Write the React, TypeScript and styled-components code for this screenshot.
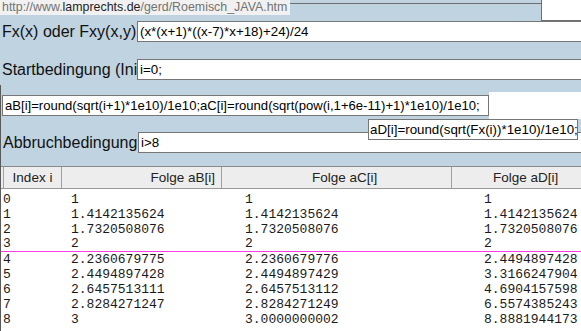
import styled, { createGlobalStyle } from "styled-components";

const GlobalStyle = createGlobalStyle`
  html, body {
    margin: 0;
    padding: 0;
  }

  body {
    background: #bfd3e1;
    font-family: "Liberation Sans", Arial, sans-serif;
  }
`;

const rows = [
  ["0", "1", "1", "1"],
  ["1", "1.4142135624", "1.4142135624", "1.4142135624"],
  ["2", "1.7320508076", "1.7320508076", "1.7320508076"],
  ["3", "2", "2", "2"],
  ["4", "2.2360679775", "2.2360679776", "2.4494897428"],
  ["5", "2.4494897428", "2.4494897429", "3.3166247904"],
  ["6", "2.6457513111", "2.6457513112", "4.6904157598"],
  ["7", "2.8284271247", "2.8284271249", "6.5574385243"],
  ["8", "3", "3.0000000002", "8.8881944173"],
];

export default function App() {
  return (
    <Page>
      <GlobalStyle />
      <TopBar>
        <UrlTip>
          http://www.<Domain>lamprechts.de</Domain>/gerd/Roemisch_JAVA.htm
        </UrlTip>
        <TopLine />
        <CornerBox />
      </TopBar>

      <FieldRow>
        <Label>Fx(x) oder Fxy(x,y)</Label>
        <TextField readOnly defaultValue="(x*(x+1)*((x-7)*x+18)+24)/24" />
      </FieldRow>

      <FieldRow $top={17}>
        <Label>Startbedingung (Initialisierung)</Label>
        <TextField readOnly defaultValue="i=0;" />
      </FieldRow>

      <Lower>
        <FormulaRow>
          <LongField
            readOnly
            defaultValue="aB[i]=round(sqrt(i+1)*1e10)/1e10;aC[i]=round(sqrt(pow(i,1+6e-11)+1)*1e10)/1e10;"
          />
          <WhiteFill />
        </FormulaRow>

        <OverlayRow>
          <OverlayField readOnly defaultValue="aD[i]=round(sqrt(Fx(i))*1e10)/1e10;" />
        </OverlayRow>

        <FieldRow>
          <Label>Abbruchbedingung</Label>
          <TextField readOnly defaultValue="i>8" />
        </FieldRow>

        <Table>
          <HeadRow>
            <HeadCell $w={59} $align="center" $first>
              Index i
            </HeadCell>
            <HeadCell $w={160} $align="right" $inset={6}>
              Folge aB[i]
            </HeadCell>
            <HeadCell $w={230} $align="left" $inset={90}>
              Folge aC[i]
            </HeadCell>
            <HeadCell $w={148} $align="left" $inset={41}>
              Folge aD[i]
            </HeadCell>
          </HeadRow>
          <Body>
            {rows.map((r) => (
              <DataRow key={r[0]} $marked={r[0] === "3"}>
                {r.map((v, i) => (
                  <span key={i}>{v}</span>
                ))}
              </DataRow>
            ))}
          </Body>
        </Table>
      </Lower>
    </Page>
  );
}

const Page = styled.div`
  width: 581px;
  height: 331px;
  overflow: hidden;
`;

const TopBar = styled.div`
  display: flex;
  align-items: flex-start;
  height: 21px;
`;

const UrlTip = styled.div`
  flex: none;
  height: 15px;
  padding: 0 3px 0 2px;
  background: #f1f1f1;
  color: #737373;
  font-size: 12.4px;
  line-height: 15px;
  white-space: nowrap;
`;

const Domain = styled.span`
  color: #1e1e1e;
`;

const TopLine = styled.div`
  flex: 1;
  margin-top: 3px;
  border-top: 1px solid #6e6e6e;
`;

const CornerBox = styled.div`
  flex: none;
  width: 39px;
  height: 20px;
  background: #fff;
  border-left: 1px solid #6e6e6e;
  border-bottom: 1px solid #6e6e6e;
`;

const FieldRow = styled.div<{ $top?: number }>`
  display: flex;
  height: 21px;
  margin-top: ${({ $top }) => $top ?? 0}px;
`;

const Label = styled.div`
  flex: none;
  width: 135px;
  padding-left: 2px;
  overflow: hidden;
  white-space: nowrap;
  color: #111;
  font-size: 16px;
  line-height: 21px;
`;

const fieldBase = `
  box-sizing: border-box;
  height: 21px;
  margin: 0;
  border: 1px solid #767676;
  background: #fff;
  color: #000;
  font-family: "Liberation Sans", Arial, sans-serif;
  font-size: 13.33px;
  outline: none;
`;

const TextField = styled.input`
  ${fieldBase};
  flex: none;
  width: 470px;
  padding: 0 2px;
`;

const Lower = styled.div`
  margin-top: 5px;
  padding-top: 7px;
  border-left: 1px solid #5a5a5a;
`;

const FormulaRow = styled.div`
  display: flex;
  align-items: flex-start;
  height: 27px;
`;

const LongField = styled.input`
  ${fieldBase};
  flex: none;
  width: 487px;
  margin: 3px 0 0 1px;
  padding: 0 0 0 2px;
  font-size: 13.1px;
`;

const WhiteFill = styled.div`
  flex: 1;
  height: 27px;
  background: #fff;
`;

const OverlayRow = styled.div`
  position: relative;
  z-index: 1;
  display: flex;
  height: 21px;
  margin-bottom: -8px;
  padding-left: 367px;
`;

const OverlayField = styled.input`
  ${fieldBase};
  flex: none;
  width: 210px;
  padding: 0 0 0 1px;
`;

const Table = styled.div`
  margin-top: 13px;
  border-top: 1px solid #8a8a8a;
  background: #fff;
`;

const HeadRow = styled.div`
  display: flex;
  height: 21px;
  padding-left: 2px;
  background: #ededed;
  border-bottom: 1px solid #9a9a9a;
`;

const HeadCell = styled.div<{
  $w: number;
  $align: "left" | "center" | "right";
  $inset?: number;
  $first?: boolean;
}>`
  flex: none;
  box-sizing: border-box;
  width: ${({ $w }) => $w}px;
  border-right: 1px solid #a0a0a0;
  border-left: ${({ $first }) => ($first ? "1px solid #a0a0a0" : "none")};
  text-align: ${({ $align }) => $align};
  padding-left: ${({ $align, $inset }) => ($align === "left" ? $inset ?? 0 : 0)}px;
  padding-right: ${({ $align, $inset }) => ($align === "right" ? $inset ?? 0 : 0)}px;
  color: #222;
  font-size: 13.5px;
  line-height: 21px;
  white-space: nowrap;
`;

const Body = styled.div`
  padding-top: 3px;
  height: 160px;
`;

const DataRow = styled.div<{ $marked?: boolean }>`
  display: grid;
  grid-template-columns: 68px 174px 239px auto;
  box-sizing: border-box;
  height: 15px;
  padding-left: 2px;
  border-bottom: ${({ $marked }) => ($marked ? "1px solid #ff3de8" : "none")};
  color: #1a1a1a;
  font-family: "Liberation Mono", "Courier New", monospace;
  font-size: 13px;
  line-height: ${({ $marked }) => ($marked ? 14 : 15)}px;
  white-space: nowrap;
`;
